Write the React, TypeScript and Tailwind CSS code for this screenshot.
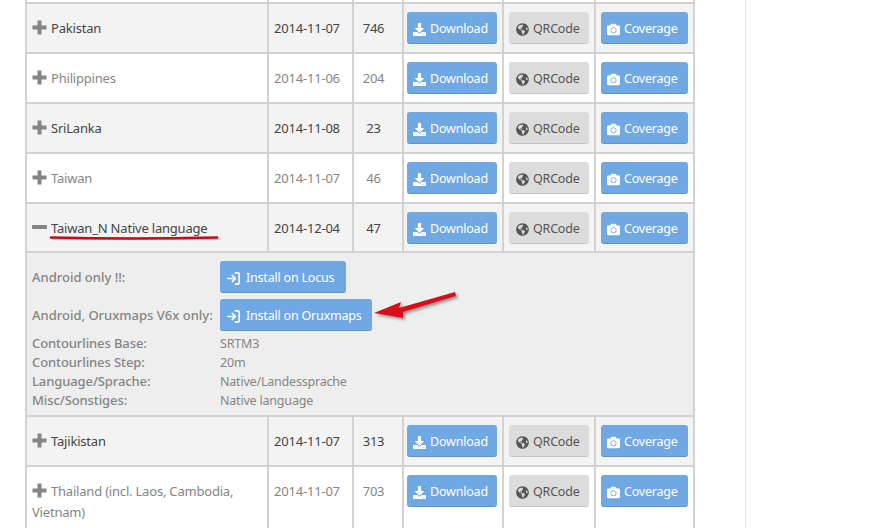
import React from "react";
import { FaCamera, FaDownload, FaGlobeAmericas } from "react-icons/fa";
import { LogIn } from "lucide-react";

const rows = [
  { name: "Pakistan", date: "2014-11-07", count: "746" },
  { name: "Philippines", date: "2014-11-06", count: "204" },
  { name: "SriLanka", date: "2014-11-08", count: "23" },
  { name: "Taiwan", date: "2014-11-07", count: "46" },
];

const rowsAfter = [
  { name: "Tajikistan", date: "2014-11-07", count: "313" },
  { name: "Thailand (incl. Laos, Cambodia, Vietnam)", date: "2014-11-07", count: "703" },
];

const info = [
  ["Contourlines Base:", "SRTM3"],
  ["Contourlines Step:", "20m"],
  ["Language/Sprache:", "Native/Landessprache"],
  ["Misc/Sonstiges:", "Native language"],
];

const cell = "border-2 border-[#d2d2d2] align-top";
const btn = "flex items-center gap-[4px] h-8 pt-[3px] rounded-[3px] border-b text-[12.5px] tracking-[-0.2px]";

function Toggle({ open }: { open?: boolean }) {
  return (
    <svg className="inline-block mr-1 -mt-[5px] align-middle" width="15" height="15" viewBox="0 0 15 15" fill="#858585">
      {open ? (
        <rect x="0" y="5" width="15" height="4" rx="1" />
      ) : (
        <path d="M5.5 0.5h4v5h5v4h-5v5h-4v-5h-5v-4h5z" />
      )}
    </svg>
  );
}

function Row({ name, date, count, dark, open, h = "h-[50px]" }: { name: string; date: string; count: string; dark: boolean; open?: boolean; h?: string }) {
  return (
    <tr className={dark ? "bg-[#f3f3f3] text-[#444]" : "bg-white text-[#858585]"}>
      <td className={`${cell} pl-[5px] pr-1 pt-[14px] pb-[5px] leading-[21px]`}>
        <Toggle open={open} />
        {name}
      </td>
      <td className={`${cell} pl-[5px] pt-[15px] ${h}`}>{date}</td>
      <td className={`${cell} text-center pt-[15px] pr-[9px]`}>{count}</td>
      <td className={`${cell} pt-[8px]`}>
        <a className={`${btn} ml-[3px] pl-[6px] w-[90px] bg-[#70a8e4] border-[#5f92c9] text-white`}>
          <FaDownload className="w-[13px] h-[13px]" />
          Download
        </a>
      </td>
      <td className={`${cell} pt-[8px]`}>
        <a className={`${btn} ml-[5px] pl-[7px] w-[80px] bg-[#dcdcdc] border-[#c4c4c4] text-[#555]`}>
          <FaGlobeAmericas className="w-[13px] h-[13px]" />
          QRCode
        </a>
      </td>
      <td className={`${cell} pt-[8px]`}>
        <a className={`${btn} ml-[5px] pl-[6px] w-[87px] bg-[#70a8e4] border-[#5f92c9] text-white`}>
          <FaCamera className="w-[13px] h-[13px]" />
          Coverage
        </a>
      </td>
    </tr>
  );
}

function InstallButton({ label, width }: { label: string; width: string }) {
  return (
    <a className={`${btn} !gap-[5px] pl-[6px] bg-[#70a8e4] border-[#5f92c9] text-white font-normal ${width}`}>
      <LogIn className="w-[15px] h-[15px]" strokeWidth={2.5} />
      {label}
    </a>
  );
}

export default function App() {
  return (
    <div className="relative h-[528px] overflow-hidden bg-white font-['Noto_Sans','Open_Sans',sans-serif] text-[13px] tracking-[-0.2px]">
      <div className="w-[746px] pl-[25px] border-r border-[#e3e3e3] h-[528px]">
        <table className="table-fixed border-collapse w-[668px]">
          <colgroup>
            <col className="w-[242px]" />
            <col className="w-[85px]" />
            <col className="w-[50px]" />
            <col className="w-[100px]" />
            <col className="w-[92px]" />
            <col className="w-[99px]" />
          </colgroup>
          <tbody>
            <tr className="h-[3px]">
              {[0, 1, 2, 3, 4, 5].map((i) => (
                <td key={i} className="border-x-2 border-[#d2d2d2]" />
              ))}
            </tr>
            {rows.map((r, i) => (
              <Row key={r.name} {...r} dark={i % 2 === 0} />
            ))}
            <Row name="Taiwan_N Native language" date="2014-12-04" count="47" dark open h="h-[49px]" />
            <tr className="bg-[#eeeeee] text-[#858585]">
              <td colSpan={6} className="border-2 border-[#d2d2d2] pl-[5px] pt-2 pb-[5px] h-[163px] align-top">
                <div className="grid grid-cols-[188px_1fr] items-center gap-y-[6px] font-medium tracking-normal">
                  <span className="pt-[2px]">Android only !!:</span>
                  <InstallButton label="Install on Locus" width="w-[126px]" />
                  <span className="pt-[2px]">Android, Oruxmaps V6x only:</span>
                  <InstallButton label="Install on Oruxmaps" width="w-[152px]" />
                </div>
                <div className="grid grid-cols-[188px_1fr] mt-[3px] leading-[19px]">
                  {info.map(([k, v]) => (
                    <React.Fragment key={k}>
                      <span className="font-medium tracking-[-0.1px]">{k}</span>
                      <span className="text-[12.5px]">{v}</span>
                    </React.Fragment>
                  ))}
                </div>
              </td>
            </tr>
            {rowsAfter.map((r, i) => (
              <Row key={r.name} {...r} dark={i % 2 === 0} />
            ))}
          </tbody>
        </table>
      </div>
      {/* red marker annotations */}
      <svg className="absolute left-0 top-0 pointer-events-none" width="893" height="528" fill="none">
        <defs>
          <filter id="s" x="-20%" y="-100%" width="140%" height="300%">
            <feDropShadow dx="2" dy="2" stdDeviation="1.5" floodColor="#000" floodOpacity="0.4" />
          </filter>
        </defs>
        <path d="M51 237.5 Q130 239.5 217 237.5" stroke="#c0101a" strokeWidth="2.5" strokeLinecap="round" filter="url(#s)" />
        <path d="M374 313 L401 302 L399 308 L455 292 L456 296 L403 312 L403 318 Z" fill="#d8101c" filter="url(#s)" />
      </svg>
    </div>
  );
}
